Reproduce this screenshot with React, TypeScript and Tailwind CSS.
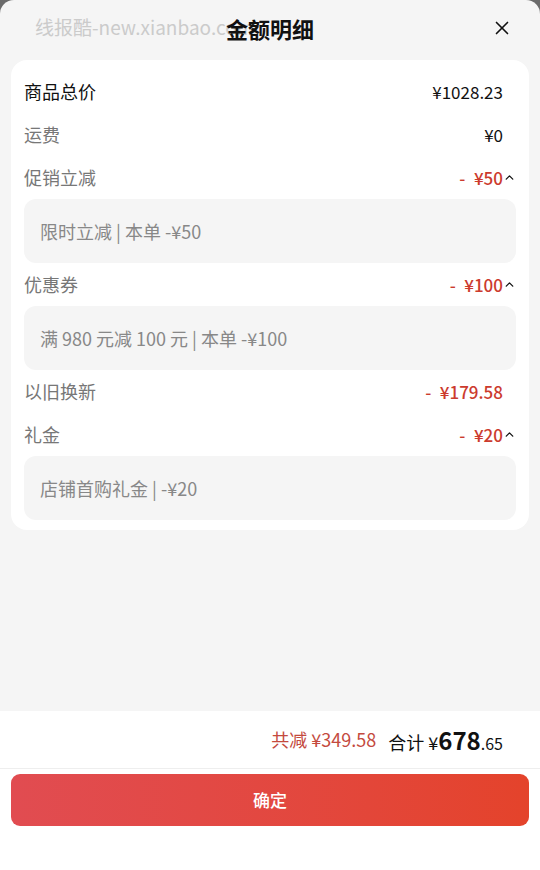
import { ChevronUp, X } from "lucide-react";

const font = { fontFamily: '"Noto Sans CJK SC", "Noto Sans", sans-serif' };

type Row = {
  label: string;
  value: string;
  strong?: boolean;
  red?: boolean;
  detail?: string;
};

const rows: Row[] = [
  { label: "商品总价", value: "¥1028.23", strong: true },
  { label: "运费", value: "¥0" },
  { label: "促销立减", value: "-\u2002¥50", red: true, detail: "限时立减 | 本单 -¥50" },
  { label: "优惠券", value: "-\u2002¥100", red: true, detail: "满 980 元减 100 元 | 本单 -¥100" },
  { label: "以旧换新", value: "-\u2002¥179.58", red: true },
  { label: "礼金", value: "-\u2002¥20", red: true, detail: "店铺首购礼金 | -¥20" },
];

export default function App() {
  return (
    <div className="h-[870px] w-[540px] bg-[#6b6b6b] overflow-hidden" style={font}>
      <div className="flex h-full flex-col rounded-t-[14px] bg-[#f5f5f5] overflow-hidden">
        <div className="relative flex h-[60px] shrink-0 items-center justify-center">
          {/* watermark sits under the title, as in the screenshot */}
          <span className="absolute left-[35px] top-[13px] whitespace-nowrap text-[19px] text-[#cbcbcb]">
            线报酷-new.xianbao.com
          </span>
          <h1 className="relative text-[22px] font-bold text-[#111] -mt-[4px]">金额明细</h1>
          <X className="absolute right-[27px] top-[17px] h-[22px] w-[22px] text-[#111]" strokeWidth={1.8} />
        </div>

        <div className="mx-[11px] rounded-[16px] bg-white px-[13px] pt-[10px] pb-[10px]">
          {rows.map((r) => (
            <div key={r.label}>
              <div className="flex h-[43px] items-center justify-between">
                <span className={`text-[18px] ${r.strong ? "text-[#111]" : "text-[#777]"}`}>{r.label}</span>
                <div className="flex items-center">
                  <span
                    className={`text-[17px] ${r.red ? "text-[#cc3b2e] font-medium" : "text-[#111]"}`}
                  >
                    {r.value}
                  </span>
                  {r.detail ? (
                    <ChevronUp className="h-[13px] w-[13px] text-[#111]" strokeWidth={2.4} />
                  ) : (
                    <span className="w-[13px]" />
                  )}
                </div>
              </div>
              {r.detail && (
                <div className="flex h-[64px] items-center rounded-[12px] bg-[#f5f5f5] pl-[16px] text-[18px] text-[#888]">
                  {r.detail}
                </div>
              )}
            </div>
          ))}
        </div>

        <div className="flex-1" />

        <div className="h-[159px] shrink-0 bg-white">
          <div className="flex h-[58px] items-center justify-end gap-[12px] border-b border-[#eeeeee] pr-[37px]">
            <span className="text-[18px] text-[#c44a3e]">共减 ¥349.58</span>
            <span className="flex items-baseline text-[#111]">
              <span className="text-[18px]">合计 ¥</span>
              <span className="text-[24px] font-bold">678</span>
              <span className="text-[16px]">.65</span>
            </span>
          </div>
          <div className="px-[11px] pt-[5px]">
            <button className="flex h-[52px] w-full items-center justify-center rounded-[9px] bg-gradient-to-r from-[#e14c51] to-[#e4432b] text-[17px] font-medium text-white">
              确定
            </button>
          </div>
        </div>
      </div>
    </div>
  );
}
